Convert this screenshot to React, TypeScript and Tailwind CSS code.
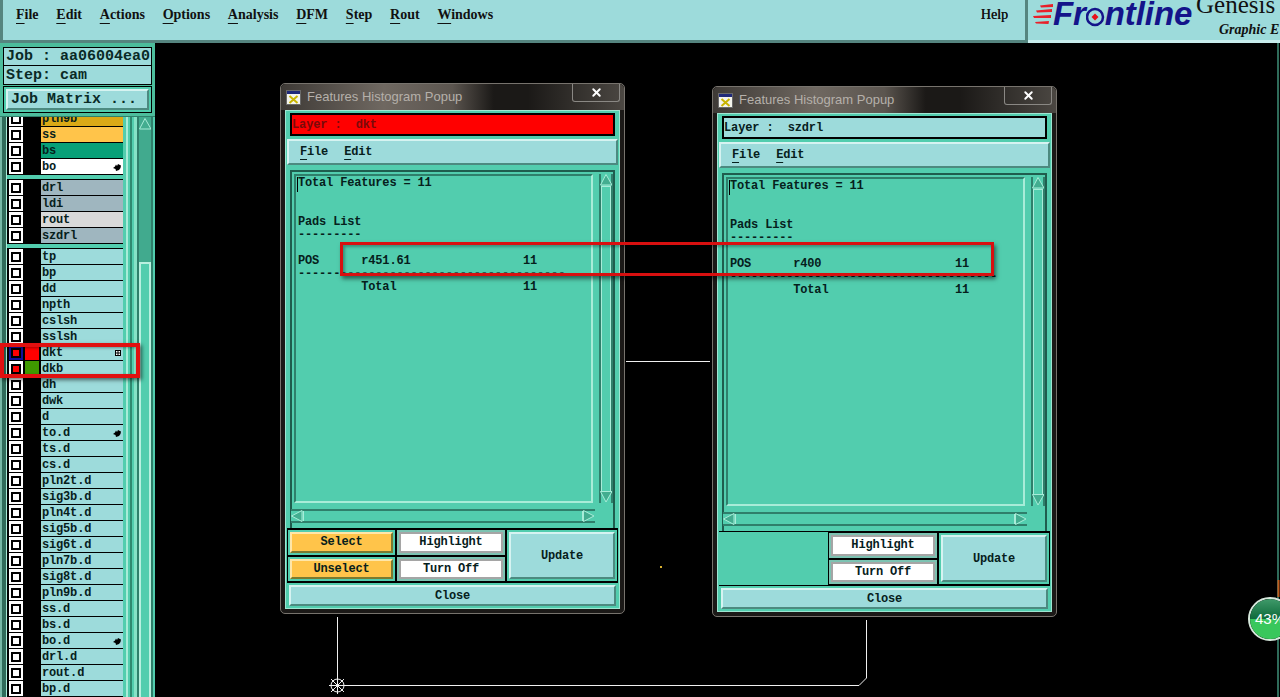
import React from "react";
import { X } from "lucide-react";

const MONO = "font-['Liberation_Mono',monospace] font-bold text-[12px] tracking-[-0.17px] text-[#06201c]";
const BEVEL = "border-2 border-t-[#d6f3f1] border-l-[#d6f3f1] border-r-[#4c8a80] border-b-[#4c8a80]";

type Layer = { n: string; bg?: string; sw?: string; check?: string; ring?: string; mark?: "hand" | "grid" };

const groups: Layer[][] = [
  [
    { n: "pln9b", bg: "bg-[#dba916]" },
    { n: "ss", bg: "bg-[#ffc44a]" },
    { n: "bs", bg: "bg-[#08a078]" },
    { n: "bo", bg: "bg-white", mark: "hand" },
  ],
  [
    { n: "drl", bg: "bg-[#9fb6bf]" },
    { n: "ldi", bg: "bg-[#9fb6bf]" },
    { n: "rout", bg: "bg-[#d9d9d9]" },
    { n: "szdrl", bg: "bg-[#9fb6bf]" },
  ],
  [
    { n: "tp" },
    { n: "bp" },
    { n: "dd" },
    { n: "npth" },
    { n: "cslsh" },
    { n: "sslsh" },
    { n: "dkt", sw: "bg-[#ff0000]", check: "bg-[#ff0000]", ring: "bg-[#10109a]", mark: "grid" },
    { n: "dkb", sw: "bg-[#3f9a00]", check: "bg-[#ff0000]" },
    { n: "dh" },
    { n: "dwk" },
    { n: "d" },
    { n: "to.d", mark: "hand" },
    { n: "ts.d" },
    { n: "cs.d" },
    { n: "pln2t.d" },
    { n: "sig3b.d" },
    { n: "pln4t.d" },
    { n: "sig5b.d" },
    { n: "sig6t.d" },
    { n: "pln7b.d" },
    { n: "sig8t.d" },
    { n: "pln9b.d" },
    { n: "ss.d" },
    { n: "bs.d" },
    { n: "bo.d", mark: "hand" },
    { n: "drl.d" },
    { n: "rout.d" },
    { n: "bp.d" },
  ],
];

function Hand() {
  return (
    <svg width="8" height="8" viewBox="0 0 8 8" className="shrink-0">
      <path d="M0 5 L2 3.5 L3 1.5 L4 3 L5 1 L8 2.5 L7.5 5 L6 7 L3 8 L2.5 6 Z" fill="#000" />
    </svg>
  );
}

function GridMark() {
  return (
    <svg width="6" height="6" viewBox="0 0 6 6" className="shrink-0">
      <rect x="0.5" y="0.5" width="5" height="5" fill="#fff" stroke="#000" />
      <path d="M3 0V6M0 3H6" stroke="#000" />
    </svg>
  );
}

function Row({ l }: { l: Layer }) {
  return (
    <div className="flex h-[15px] items-center">
      <div className={`ml-[2px] flex h-[15px] w-[14px] items-center justify-center ${l.ring ?? "bg-white"}`}>
        <div className="flex h-[10px] w-[10px] items-center justify-center bg-black">
          <div className={`h-[6px] w-[6px] ${l.check ?? "bg-white"}`} />
        </div>
      </div>
      <div className={`ml-[2px] h-[15px] w-[14px] ${l.sw ?? "bg-black"}`} />
      <div className={`ml-[2px] flex h-[15px] w-[82px] items-center justify-between pl-px pr-[2px] ${l.bg ?? "bg-[#9ddbdb]"}`}>
        <span className={MONO}>{l.n}</span>
        {l.mark === "hand" && <Hand />}
        {l.mark === "grid" && <GridMark />}
      </div>
    </div>
  );
}

function M({ t }: { t: string }) {
  return (
    <span>
      <span className="underline underline-offset-[4px]">{t[0]}</span>
      {t.slice(1)}
    </span>
  );
}

function WinIcon() {
  return (
    <svg width="15" height="15" viewBox="0 0 15 15" className="shrink-0">
      <rect x="0.5" y="0.5" width="14" height="14" fill="#f4f4ec" stroke="#6a6a6a" />
      <rect x="1" y="1" width="13" height="3" fill="#202a7a" />
      <path d="M3.5 6L11.5 13M11.5 6L3.5 13" stroke="#c8b400" strokeWidth="2" />
    </svg>
  );
}

function Arrow({ d }: { d: "u" | "d" | "l" | "r" }) {
  const p = { u: "M6 0.5 L12 11 L0.5 11 Z", d: "M0.5 0.5 L12 0.5 L6 11 Z", l: "M11 0.5 L11 11.5 L0.5 6 Z", r: "M0.5 0.5 L0.5 11.5 L11 6 Z" }[d];
  return (
    <svg width="12" height="12" viewBox="0 0 12 12" className="shrink-0">
      <path d={p} fill="#43ad90" stroke="#a8ecd8" strokeWidth="1" />
    </svg>
  );
}

function Popup({ left, top, layer, layerCls, layerText, name, hasSelect }: {
  left: string; top: string; layer: string; layerCls: string; layerText: string; name: string; hasSelect: boolean;
}) {
  const text =
    "Total Features = 11\n\n\nPads List\n---------\n\n" +
    `POS      ${name}${" ".repeat(23 - name.length)}11\n` +
    "-".repeat(38) +
    "\n         Total" + " ".repeat(18) + "11";
  const smallCell = "flex items-center justify-center border border-black p-[2px]";
  return (
    <div className={`absolute ${left} ${top} flex h-[531px] w-[345px] flex-col rounded-[5px] border border-[#77736d] bg-[#1b1917] px-[4px] pb-[4px]`}>
      <div className="relative -mx-[4px] flex h-[26px] shrink-0 items-center gap-[6px] rounded-t-[5px] bg-[linear-gradient(to_right,#3e3a36,#6f6861_30%,#5b554f_50%,#1b1917_62%,#1b1917_72%,#4b4742)] px-[5px]">
        <WinIcon />
        <span className="font-['Liberation_Sans',sans-serif] text-[13px] text-[#b5b0aa]">Features Histogram Popup</span>
        <div className="absolute right-[4px] top-0 flex h-[18px] w-[48px] items-center justify-center rounded-b-[3px] border border-t-0 border-[#8a8884]">
          <X size={13} strokeWidth={3.5} className="text-white" />
        </div>
      </div>

      <div className="flex flex-1 flex-col border border-[#9fe6d2] bg-[#52cdae] px-px">
        <div className={`mx-[3px] mt-[2px] flex h-[23px] shrink-0 items-center border-2 border-black ${layerCls}`}>
          <span className={`whitespace-pre font-['Liberation_Mono',monospace] text-[12px] font-bold tracking-[-0.13px] ${layerText}`}>{layer}</span>
        </div>

        <div className={`mt-[3px] flex h-[26px] shrink-0 items-center gap-[16px] bg-[#9ddbdb] pb-px pl-[11px] ${BEVEL} ${MONO}`}>
          <M t="File" />
          <M t="Edit" />
        </div>

        <div className="mx-[3px] mt-[5px] flex flex-1 flex-col border-2 border-b-0 border-[#1f5d4e] pb-[5px]">
          <div className="flex flex-1 pt-[2px]">
            <div className="relative ml-[2px] w-[300px] border-2 border-t-[#2f7f6b] border-l-[#2f7f6b] border-r-[#a8ecd8] border-b-[#a8ecd8] pl-[2px] pt-px">
              <div className="absolute left-[1px] top-px h-[15px] w-px bg-black" />
              <pre className={`${MONO} leading-[13px]`} style={{ fontFamily: "'Liberation Mono', monospace" }}>{text}</pre>
            </div>
            <div className="ml-[6px] flex w-[14px] flex-col items-center justify-between border-x-2 border-x-[#2f7f6b] bg-[#52cdae]">
              <Arrow d="u" />
              <div className="w-full flex-1 border-x border-t border-[#a8ecd8]" />
              <Arrow d="d" />
            </div>
          </div>
          <div className="mt-[6px] -ml-px flex h-[14px] w-[304px] items-center border-y-2 border-y-[#2f7f6b] bg-[#52cdae]">
            <Arrow d="l" />
            <div className="h-full flex-1 border-x border-[#a8ecd8]" />
            <Arrow d="r" />
          </div>
        </div>

        <div className="grid h-[54px] shrink-0 grid-cols-[109px_110px_1fr] grid-rows-2 border-t border-black">
          {hasSelect ? (
            <div className={`${smallCell} bg-[#52cdae]`}>
              <div className={`flex h-full w-full items-center justify-center border-2 border-t-[#ffe6a8] border-l-[#ffe6a8] border-r-[#7a7a30] border-b-[#7a7a30] bg-[#ffc44a] ${MONO}`}>Select</div>
            </div>
          ) : (
            <div className="row-span-2 bg-[#52cdae]" />
          )}
          <div className={`${smallCell} bg-[#7cc3b2]`}>
            <div className={`flex h-full w-full items-center justify-center border-2 border-[#a5a5a5] bg-white ${MONO}`}>Highlight</div>
          </div>
          <div className={`${smallCell} row-span-2 bg-[#52cdae]`}>
            <div className={`flex h-full w-full items-center justify-center bg-[#9ddbdb] ${BEVEL} ${MONO}`}>Update</div>
          </div>
          {hasSelect && (
            <div className={`${smallCell} bg-[#52cdae]`}>
              <div className={`flex h-full w-full items-center justify-center border-2 border-t-[#ffe6a8] border-l-[#ffe6a8] border-r-[#7a7a30] border-b-[#7a7a30] bg-[#ffc44a] ${MONO}`}>Unselect</div>
            </div>
          )}
          <div className={`${smallCell} bg-[#7cc3b2]`}>
            <div className={`flex h-full w-full items-center justify-center border-2 border-[#a5a5a5] bg-white ${MONO}`}>Turn Off</div>
          </div>
        </div>

        <div className="flex h-[26px] shrink-0 border-t border-black bg-[#52cdae] p-[2px]">
          <div className={`flex flex-1 items-center justify-center bg-[#9ddbdb] ${BEVEL} ${MONO}`}>Close</div>
        </div>
      </div>
    </div>
  );
}

export default function App() {
  return (
    <div className="relative flex h-[697px] w-[1280px] flex-col overflow-hidden bg-black">
      {/* Top bar */}
      <header className="flex h-[43px] shrink-0 bg-[#9ddbdb]">
        <div className="flex h-full w-[1028px] items-start justify-between border-x-[3px] border-b-[3px] border-[#55857f] pl-[13px] pr-[17px] pt-[6px] font-['Liberation_Serif',serif] text-[14px] font-bold leading-[18px] text-[#111]">
          <div className="flex gap-[17.75px]">
            {["File", "Edit", "Actions", "Options", "Analysis", "DFM", "Step", "Rout", "Windows"].map((t) => (
              <M key={t} t={t} />
            ))}
          </div>
          <span className="font-normal [text-shadow:0.3px_0_0_#111]">Help</span>
        </div>
        <div className="relative flex-1 overflow-hidden border-b-[3px] border-[#c9eeee] pl-[5px]">
          <div className="flex items-center">
            <svg width="20" height="24" viewBox="0 0 20 24" className="mt-[2px] shrink-0">
              <path d="M7 2.5L20 1V4L8 4.5ZM3 7.5L19 6V9L4 9.5ZM0 13L18 12V15L1 15ZM2 19L16 18L15.5 21L3 20.5Z" fill="#e8202a" />
            </svg>
            <span className="flex items-center font-['Liberation_Sans',sans-serif] text-[33px] font-bold italic leading-[28px] tracking-[-0.1px] text-[#14148a]">
              Fr
              <svg width="19" height="20" viewBox="0 0 19 20" className="mt-[5px] shrink-0">
                <circle cx="9" cy="10" r="8" fill="none" stroke="#14148a" strokeWidth="2.5" />
                <path d="M9 6.5L12.5 10L9 13.5L5.5 10Z" fill="#e8101a" />
              </svg>
              ntline
            </span>
          </div>
          <span className="absolute left-[168px] top-[-8px] whitespace-nowrap font-['Liberation_Serif',serif] text-[25px] leading-[26px] text-[#111]">Genesis</span>
          <span className="absolute left-[191px] top-[22px] whitespace-nowrap font-['Liberation_Serif',serif] text-[14px] font-bold italic leading-[16px] text-[#111]">Graphic E</span>
        </div>
      </header>

      <div className="flex min-h-0 flex-1">
        {/* Left column */}
        <aside className="flex w-[155px] shrink-0 flex-col">
          <div className="relative z-10 flex h-[74px] shrink-0 flex-col border-b border-[#2f7f6b] bg-[#4cbd9c] px-[3px] pt-[4px] font-['Liberation_Mono',monospace] text-[15px] font-bold text-[#0a2a26]">
            <div className="flex h-[19px] items-center whitespace-pre border border-black bg-[#9ddbdb] pl-[2px] pt-[2px]">Job : aa06004ea0</div>
            <div className="-mt-px flex h-[20px] items-center whitespace-pre border border-black bg-[#9ddbdb] pl-[2px] pt-[2px]">Step: cam</div>
            <div className="mt-px flex h-[27px] items-stretch border border-black bg-[#52cdae] p-[2px]">
              <div className={`flex flex-1 items-center whitespace-pre bg-[#9ddbdb] pl-[3px] pt-[2px] ${BEVEL}`}>Job Matrix ...</div>
            </div>
          </div>
          <div className="flex min-h-0 flex-1 overflow-hidden bg-[#52cdae]">
            <div className="w-[2px] shrink-0 bg-[#76b8a6]" />
            <div className="w-[4px] shrink-0 bg-[#2f6b5a]" />
            <div className="w-px shrink-0 bg-[#a8ecd8]" />
            <div className="-mt-[7px] flex w-[116px] shrink-0 flex-col gap-[4px]">
              {groups.map((g, i) => (
                <div key={i} className="flex flex-col gap-px bg-black py-px">
                  {g.map((l) => (
                    <Row key={l.n} l={l} />
                  ))}
                </div>
              ))}
            </div>
            <div className="ml-[3px] w-[2px] shrink-0 bg-[#a8ecd8]" />
            <div className="w-[2px] shrink-0 bg-[#52cdae]" />
            <div className="w-[2px] shrink-0 bg-[#2f8a70]" />
            <div className="w-[2px] shrink-0 bg-[#52cdae]" />
            <div className="w-[3px] shrink-0 bg-[#86e2c6]" />
            <div className="flex w-[16px] shrink-0 flex-col border-x-2 border-x-[#2f7f6b] bg-[#41aa8e]">
              <div className="flex h-[145px] flex-col items-center pt-px">
                <Arrow d="u" />
              </div>
              <div className="flex-1 border-x-2 border-t-2 border-[#b8f0e0] bg-[#52cdae]" />
            </div>
          </div>
        </aside>
        <main className="flex-1" />
        <aside className="w-[3px] shrink-0 border-l-2 border-[#2f6b5a]" />
      </div>

      {/* Drawing on the canvas */}
      <svg className="absolute inset-0" width="1280" height="697" viewBox="0 0 1280 697">
        <g stroke="#f0f0f0" strokeWidth="1" fill="none" shapeRendering="crispEdges">
          <path d="M626 361.5H710" />
          <path d="M337.5 617V677" />
          <path d="M345 685.5H859" />
          <path d="M866.5 620V678" />
        </g>
        <g stroke="#f0f0f0" strokeWidth="1" fill="none">
          <path d="M859 685.5L866.5 678" />
          <circle cx="337.5" cy="685.5" r="6.5" />
          <path d="M329 685.5H346M337.5 677V694M331 679L344 692M344 679L331 692" />
        </g>
        <rect x="660" y="566" width="2" height="2" fill="#d8b030" />
        <path d="M1278.5 580V597" stroke="#c05a1c" strokeWidth="2" />
      </svg>

      <Popup left="left-[280px]" top="top-[83px]" layer="Layer :  dkt" layerCls="bg-[#ff0000]" layerText="text-[#7a0a0a]" name="r451.61" hasSelect />
      <Popup left="left-[712px]" top="top-[86px]" layer="Layer :  szdrl" layerCls="bg-[#9ddbdb]" layerText="text-[#06201c]" name="r400" hasSelect={false} />

      {/* Red annotation boxes */}
      <div className="absolute left-0 top-[343px] h-[35px] w-[140px] border-4 border-[#e01010] shadow-[2px_2px_4px_rgba(0,0,0,0.55),inset_1px_1px_3px_rgba(0,0,0,0.35)]" />
      <div className="absolute left-[340px] top-[242px] h-[34px] w-[654px] border-[3px] border-[#d81010] shadow-[2px_3px_4px_rgba(0,0,0,0.5),inset_2px_2px_3px_rgba(0,0,0,0.3)]" />

      {/* Progress badge */}
      <div className="absolute left-[1248px] top-[597px] flex h-[44px] w-[44px] flex-col overflow-hidden rounded-full border-2 border-[#d6e8dc]">
        <div className="h-1/2 bg-[linear-gradient(to_bottom,#3f9a6a,#0e6a3a)]" />
        <div className="h-1/2 bg-[#39c75c]" />
        <span className="absolute inset-0 flex items-center justify-center font-['Liberation_Sans',sans-serif] text-[15px] text-white">43%</span>
      </div>
    </div>
  );
}
